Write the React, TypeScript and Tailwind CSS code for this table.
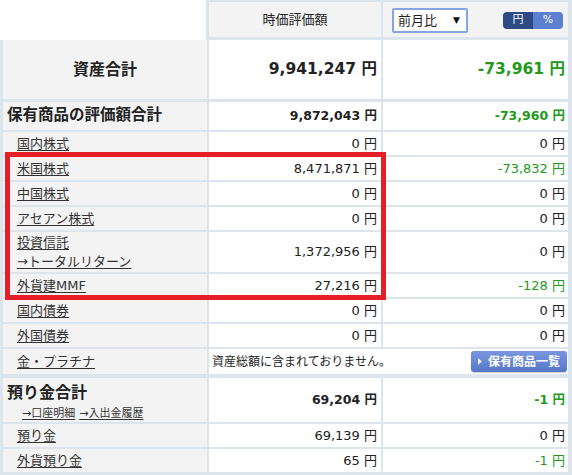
import React from "react";

const GREEN = "text-[#23991c]";

function Label({ children }: { children: React.ReactNode }) {
  return (
    <span className="underline underline-offset-[2px] decoration-[1px] text-[#333]">{children}</span>
  );
}

function Row({
  label,
  value,
  change,
  green = false,
  tall = false,
}: {
  label: React.ReactNode;
  value: string;
  change: string;
  green?: boolean;
  tall?: boolean;
}) {
  return (
    <div className={`grid grid-cols-[204px_172px_185px] gap-[2px] ${tall ? "h-[40px]" : "h-[23px]"}`}>
      <div className="bg-[#f3f3f3] flex flex-col justify-center pl-[14px] text-[13px] leading-[19px]">{label}</div>
      <div className="bg-white flex items-center justify-end pr-[4px] text-[13px] text-[#222]">{value}</div>
      <div className={`bg-white flex items-center justify-end pr-[3px] text-[13px] ${green ? GREEN : "text-[#222]"}`}>
        {change}
      </div>
    </div>
  );
}

export default function App() {
  return (
    <div className="w-[572px] h-[475px] overflow-hidden bg-white text-[#222] font-['DejaVu_Sans','Noto_Sans_CJK_JP',sans-serif]">
      {/* header */}
      <div className="flex h-[40px]">
        <div className="w-[206px] bg-white" />
        <div className="flex-1 bg-[#dde5ec] pt-[2px] pl-[3px] pr-[4px] pb-[3px] flex gap-[2px]">
          <div className="w-[172px] bg-[#f3f3f3] flex items-center justify-center text-[13px] pt-[1px]">時価評価額</div>
          <div className="flex-1 bg-[#f3f3f3] flex items-center justify-between pl-[9px] pr-[5px]">
            <div className="w-[76px] h-[25px] mt-[2px] border-2 border-[#84a5e3] rounded-[2px] bg-white flex items-center justify-between pl-[4px] pr-[6px] text-[13px]">
              <span>前月比</span>
              <span className="text-[9px] text-[#111]">▼</span>
            </div>
            <div className="flex h-[17px] w-[60px] mt-[2px] rounded-[4px] overflow-hidden text-[11px] text-white">
              <div className="w-[30px] bg-[#2d4b85] flex items-center justify-center">円</div>
              <div className="w-[30px] bg-[#5b7fd1] flex items-center justify-center">%</div>
            </div>
          </div>
        </div>
      </div>

      {/* body */}
      <div className="relative bg-[#dde5ec] pl-[3px] pr-[4px] pb-[3px] flex flex-col gap-[2px]">
        {/* asset total */}
        <div className="grid grid-cols-[204px_172px_185px] gap-[2px] h-[59px]">
          <div className="bg-[#f3f3f3] flex items-center justify-center text-[16px] font-bold">資産合計</div>
          <div className="bg-white flex items-center justify-end pr-[4px] text-[15.5px] font-bold">9,941,247 円</div>
          <div className={`bg-white flex items-center justify-end pr-[3px] text-[15.5px] font-bold ${GREEN}`}>-73,961 円</div>
        </div>

        {/* holdings total */}
        <div className="grid grid-cols-[204px_172px_185px] gap-[2px] h-[28px] mt-[1px]">
          <div className="bg-[#f3f3f3] flex items-center pl-[4px] text-[15.5px] font-bold">保有商品の評価額合計</div>
          <div className="bg-white flex items-center justify-end pr-[4px] text-[12.5px] font-bold">9,872,043 円</div>
          <div className={`bg-white flex items-center justify-end pr-[3px] text-[12.5px] font-bold ${GREEN}`}>-73,960 円</div>
        </div>

        <Row label={<Label>国内株式</Label>} value="0 円" change="0 円" />
        <Row label={<Label>米国株式</Label>} value="8,471,871 円" change="-73,832 円" green />
        <Row label={<Label>中国株式</Label>} value="0 円" change="0 円" />
        <Row label={<Label>アセアン株式</Label>} value="0 円" change="0 円" />
        <Row
          tall
          label={
            <>
              <div>
                <Label>投資信託</Label>
              </div>
              <div>
                <Label>→トータルリターン</Label>
              </div>
            </>
          }
          value="1,372,956 円"
          change="0 円"
        />
        <Row label={<Label>外貨建MMF</Label>} value="27,216 円" change="-128 円" green />
        <Row label={<Label>国内債券</Label>} value="0 円" change="0 円" />
        <Row label={<Label>外国債券</Label>} value="0 円" change="0 円" />

        {/* gold */}
        <div className="grid grid-cols-[204px_172px_185px] gap-[2px] h-[25px]">
          <div className="bg-[#f3f3f3] flex items-center pl-[14px] text-[13px]">
            <Label>金・プラチナ</Label>
          </div>
          <div className="col-span-2 bg-white flex items-center justify-between pl-[3px] pr-[1px]">
            <span className="text-[12px] text-[#222]">資産総額に含まれておりません。</span>
            <button className="h-[21px] w-[96px] rounded-[3px] bg-linear-to-b from-[#7896e0] to-[#5676c8] shadow-[0_1px_1px_rgba(0,0,0,0.2)] flex items-center pl-[7px] gap-[6px] text-white text-[12px] font-bold">
              <svg width="4" height="7" viewBox="0 0 4 7">
                <polygon points="0,0 4,3.5 0,7" fill="#e8eefc" />
              </svg>
              <span>保有商品一覧</span>
            </button>
          </div>
        </div>

        {/* deposits total */}
        <div className="grid grid-cols-[204px_172px_185px] gap-[2px] h-[44px] mt-[2px]">
          <div className="bg-[#f3f3f3] flex flex-col pt-[5px] pl-[4px]">
            <div className="text-[16px] font-bold leading-[20px]">預り金合計</div>
            <div className="mt-[2px] ml-[15px] leading-[17px] text-[11px] flex gap-[4px]">
              <Label>→口座明細</Label>
              <Label>→入出金履歴</Label>
            </div>
          </div>
          <div className="bg-white flex items-center justify-end pr-[4px] text-[12.5px] font-bold">69,204 円</div>
          <div className={`bg-white flex items-center justify-end pr-[3px] text-[12.5px] font-bold ${GREEN}`}>-1 円</div>
        </div>

        <Row label={<Label>預り金</Label>} value="69,139 円" change="0 円" />
        <Row label={<Label>外貨預り金</Label>} value="65 円" change="-1 円" green />

        {/* highlight box */}
        <div className="absolute left-[5px] top-[112px] w-[381px] h-[148px] border-[5px] border-[#e61e28] pointer-events-none" />
      </div>
    </div>
  );
}
